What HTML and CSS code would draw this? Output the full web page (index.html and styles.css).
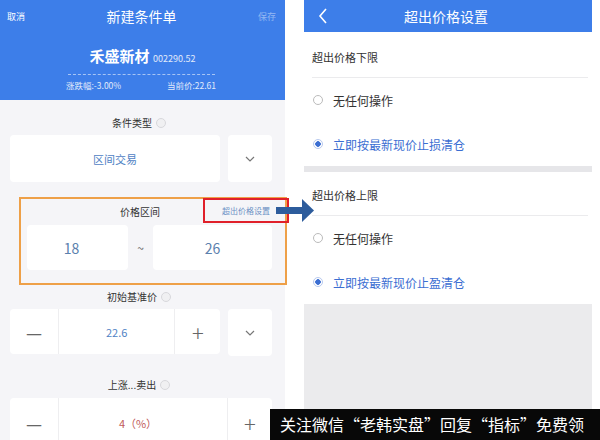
FILE: index.html
```html
<!DOCTYPE html>
<html lang="zh-CN">
<head>
    <meta charset="UTF-8">
    <meta name="viewport" content="width=device-width, initial-scale=1.0">
    <title>新建条件单</title>
    <link rel="stylesheet" href="styles.css">
</head>
<body>
    <div class="page">
        <div class="phone left">
            <div class="head">
                <div class="top-bar">
                    <span class="small">取消</span>
                    <span class="title">新建条件单</span>
                    <span class="small faded">保存</span>
                </div>
                <div class="stock">
                    <span class="stock-name">禾盛新材</span>
                    <span class="stock-code">002290.52</span>
                </div>
                <div class="dash"></div>
                <div class="stats">
                    <span>涨跌幅:-3.00%</span>
                    <span>当前价:22.61</span>
                </div>
            </div>

            <div class="body">
                <div class="field-label">条件类型 <i class="info"></i></div>
                <div class="row">
                    <div class="card grow center blue-text">区间交易</div>
                    <div class="card chev">
                        <svg width="10" height="6" viewBox="0 0 10 6"><path d="M1 1l4 4 4-4" fill="none" stroke="#777" stroke-width="1.2"/></svg>
                    </div>
                </div>

                <div class="range-box">
                    <div class="field-label tight">价格区间</div>
                    <div class="range">
                        <div class="card num">18</div>
                        <span class="tilde">~</span>
                        <div class="card num wide">26</div>
                    </div>
                    <div class="red-mark">超出价格设置</div>
                </div>

                <div class="field-label l3">初始基准价 <i class="info"></i></div>
                <div class="row">
                    <div class="card stepper short">
                        <span class="step">—</span>
                        <span class="val blue-text">22.6</span>
                        <span class="step plus">+</span>
                    </div>
                    <div class="card chev">
                        <svg width="10" height="6" viewBox="0 0 10 6"><path d="M1 1l4 4 4-4" fill="none" stroke="#777" stroke-width="1.2"/></svg>
                    </div>
                </div>

                <div class="field-label l4">上涨...卖出 <i class="info"></i></div>
                <div class="row">
                    <div class="card stepper full">
                        <span class="step">—</span>
                        <span class="val red-text">4（%）</span>
                        <span class="step plus">+</span>
                    </div>
                </div>
            </div>
        </div>

        <div class="phone right">
            <div class="head-r">
                <svg class="back" width="10" height="16" viewBox="0 0 10 16"><path d="M8 1L2 8l6 7" fill="none" stroke="#fff" stroke-width="1.6"/></svg>
                <span class="title">超出价格设置</span>
            </div>
            <div class="sec-title">超出价格下限</div>
            <div class="opt"><i class="radio"></i>无任何操作</div>
            <div class="opt on"><i class="radio"></i>立即按最新现价止损清仓</div>
            <div class="band"></div>
            <div class="sec-title second">超出价格上限</div>
            <div class="opt"><i class="radio"></i>无任何操作</div>
            <div class="opt on"><i class="radio"></i>立即按最新现价止盈清仓</div>
            <div class="rest"></div>
        </div>
    </div>

    <svg class="arrow" width="40" height="26" viewBox="0 0 40 26">
        <rect x="0" y="9" width="27" height="7" fill="#2d5c9c"/>
        <path d="M26 1L38 12.5 26 24z" fill="#2d5c9c"/>
    </svg>

    <div class="caption">关注微信“老韩实盘”回复“指标”免费领</div>
</body>
</html>
```

FILE: styles.css
```css
body { margin: 0; width: 600px; height: 440px; overflow: hidden; background: #fff; font-family: "Noto Sans CJK SC", "Noto Sans", sans-serif; position: relative; }
.page { display: flex; gap: 19px; height: 440px; }
.phone { height: 440px; }
.left { width: 285px; background: #f5f5f8; }
.right { width: 288px; background: #fff; display: flex; flex-direction: column; }

.head { height: 100px; background: #3d7ee9; color: #fff; }
.top-bar { height: 32px; display: flex; align-items: center; justify-content: space-between; padding: 0 9px 0 7px; }
.small { font-size: 9px; }
.faded { color: rgba(255,255,255,.45); }
.title { font-size: 14px; }
.stock { text-align: center; margin-top: 12px; line-height: 22px; }
.stock-name { font-size: 15px; font-weight: bold; }
.stock-code { font-size: 9px; opacity: .85; }
.dash { width: 147px; margin: 4px auto 0 68px; border-top: 1px dashed rgba(255,255,255,.55); }
.stats { display: flex; justify-content: space-between; width: 150px; margin-left: 66px; font-size: 8.5px; line-height: 20px; opacity: .85; }

.body { padding: 0 13px 0 10px; }
.field-label { height: 16px; line-height: 16px; text-align: center; font-size: 10px; color: #333; margin-top: 15px; margin-left: -4px; display: flex; justify-content: center; align-items: center; gap: 4px; }
.info { width: 8px; height: 8px; border-radius: 50%; border: 1px solid #d8d8dc; background: #f0f0f2; display: inline-block; }
.row { display: flex; gap: 8px; margin-top: 4px; }
.card { background: #fff; border-radius: 4px; height: 47px; display: flex; align-items: center; }
.grow { flex: 1; }
.center { justify-content: center; }
.blue-text { color: #4f82c4; font-size: 11px; }
.red-text { color: #c05a5a; font-size: 11px; }
.chev { width: 44px; justify-content: center; }

.range-box { position: relative; margin: 15px 0 0 9px; width: 264px; height: 84px; border: 2px solid #eea048; }
.field-label.tight { margin: 3px 26px 0 0; height: 20px; }
.range { display: flex; align-items: center; margin: 3px 0 0 6px; }
.num { width: 101px; height: 45px; justify-content: center; font-size: 14px; color: #5a80ad; }
.num:first-child { padding-right: 12px; box-sizing: border-box; }
.num.wide { width: 119px; }
.tilde { width: 25px; text-align: center; color: #666; font-size: 12px; }
.red-mark { position: absolute; left: 182px; top: -1px; width: 82px; height: 21px; border: 2px solid #e0202a; font-size: 8px; color: #6a8fc4; line-height: 21px; text-align: center; }

.field-label.l3 { margin-top: 4px; }
.field-label.l4 { margin-top: 21px; }
.stepper { height: 45px; }
.short { width: 212px; }
.full { width: 262px; margin-top: 1px; height: 50px; }
.step { width: 48px; text-align: center; font-size: 18px; color: #666; }
.val { flex: 1; text-align: center; border-left: 1px solid #eeeef0; border-right: 1px solid #eeeef0; height: 100%; display: flex; align-items: center; justify-content: center; }
.full .val { padding-right: 10px; }
.plus { width: 45px; font-size: 22px; font-weight: 300; }
.full .plus { width: 44px; }

.head-r { height: 32px; background: #3d7ee9; color: #fff; display: flex; align-items: center; position: relative; }
.back { margin-left: 14px; }
.head-r .title { position: absolute; left: 0; right: 0; text-align: center; padding-right: 4px; }
.sec-title { height: 40px; padding-top: 5px; line-height: 40px; margin: 0 4px 0 8px; border-bottom: 1px solid #ebebed; font-size: 11px; color: #333; }
.sec-title.second { padding-top: 3px; }
.opt { height: 44px; display: flex; align-items: center; padding-left: 9px; font-size: 12px; color: #333; }
.radio { border: 1px solid #bbb; border-radius: 50%; margin-right: 10px; box-sizing: border-box; width: 10px; height: 10px; }
.opt.on { color: #3b6ed2; }
.opt.on .radio { border-color: #b8c9ee; background: radial-gradient(circle, #3b6ed2 0 2.5px, #fff 3px); }
.band { height: 6px; background: #e6e6e9; }
.rest { flex: 1; background: #ebebed; }

.arrow { position: absolute; left: 276px; top: 198px; }
.caption { position: absolute; left: 270px; right: 0; top: 409px; bottom: 0; background: #080808; color: #fff; font-size: 16px; line-height: 31px; padding-left: 10px; white-space: nowrap; }
```
